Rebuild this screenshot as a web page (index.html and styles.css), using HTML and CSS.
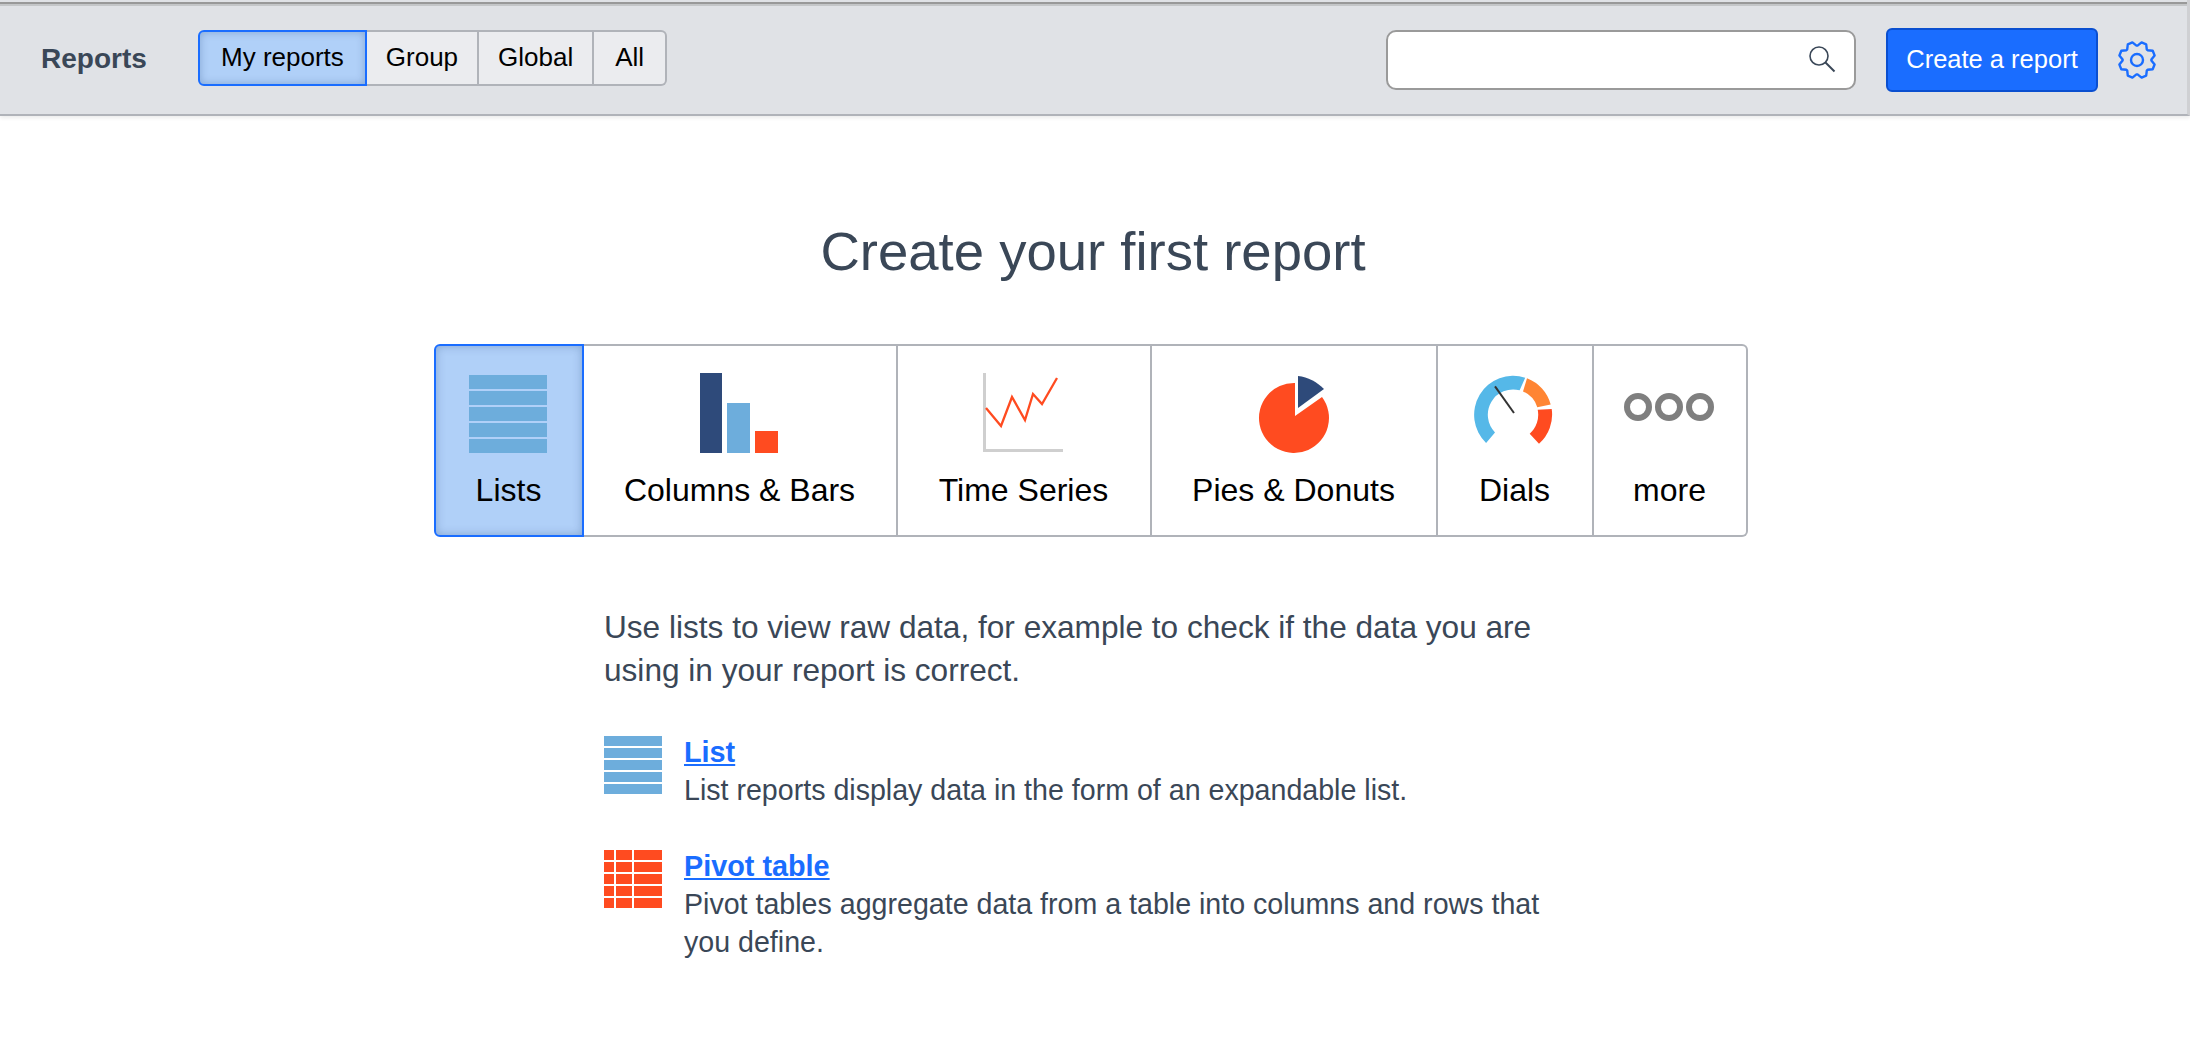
FILE: index.html
```html
<!DOCTYPE html>
<html lang="en">
<head>
    <meta charset="UTF-8">
    <title>Reports</title>
    <link rel="stylesheet" href="styles.css">
</head>
<body>
    <div class="topBar">
        <div class="barTitle">Reports</div>
        <div class="filterGroup">
            <button class="filterBtn active">My reports</button>
            <button class="filterBtn">Group</button>
            <button class="filterBtn">Global</button>
            <button class="filterBtn">All</button>
        </div>
        <div class="searchBox">
            <input class="searchInput" type="text">
            <svg class="searchIcon" width="30" height="30" viewBox="0 0 30 30">
                <circle cx="12" cy="12" r="9" fill="none" stroke="#3a4757" stroke-width="1.6"/>
                <line x1="18.500" y1="18.500" x2="27.500" y2="27.500" stroke="#3a4757" stroke-width="2"/>
            </svg>
        </div>
        <button class="createBtn">Create a report</button>
        <svg class="gearIcon" width="40" height="40" viewBox="0 0 40 40">
            <polygon transform="translate(20 20) rotate(22.5)" fill="none" stroke="#1a6dff" stroke-width="2.4" stroke-linejoin="round"
                points="-5,-13.5 -2.5,-18 2.5,-18 5,-13.5 6,-13.1 11,-14.5 14.5,-11 13.1,-6 13.5,-5 18,-2.500 18,2.500 13.500,5 13.100,6 14.500,11 11,14.500 6,13.100 5,13.500 2.500,18 -2.500,18 -5,13.500 -6,13.100 -11,14.500 -14.500,11 -13.100,6 -13.500,5 -18,2.500 -18,-2.500 -13.500,-5 -13.100,-6 -14.500,-11 -11,-14.500 -6,-13.100"/>
            <circle cx="20" cy="20" r="6" fill="none" stroke="#1a6dff" stroke-width="2.4"/>
        </svg>
    </div>

    <div class="main">
        <h1 class="pageTitle">Create your first report</h1>

        <div class="typeStrip">
            <div class="typeTab active lists">
                <svg width="78" height="80" viewBox="0 -2 78 80">
                    <rect width="78" height="14" fill="#6daddc"/>
                    <rect y="16" width="78" height="14" fill="#6daddc"/>
                    <rect y="32" width="78" height="14" fill="#6daddc"/>
                    <rect y="48" width="78" height="14" fill="#6daddc"/>
                    <rect y="64" width="78" height="14" fill="#6daddc"/>
                </svg>
                <span>Lists</span>
            </div>
            <div class="typeTab columns">
                <svg width="78" height="80" viewBox="0 0 78 80">
                    <rect width="22" height="80" fill="#2e4a7a"/>
                    <rect x="27" y="30" width="23" height="50" fill="#6daddc"/>
                    <rect x="55" y="58" width="23" height="22" fill="#ff4b20"/>
                </svg>
                <span>Columns &amp; Bars</span>
            </div>
            <div class="typeTab series">
                <svg width="80" height="80" viewBox="0 0 80 80">
                    <path d="M1.500 0V77.500H80" fill="none" stroke="#cfcfcf" stroke-width="3"/>
                    <path d="M3 35 18 53 29 24 42 47 50 21 59 31 74 5" fill="none" stroke="#ff4b20" stroke-width="2.300"/>
                </svg>
                <span>Time Series</span>
            </div>
            <div class="typeTab pies">
                <svg width="72" height="80" viewBox="-2 0 72 80">
                    <path d="M36 10A35 35 0 1 0 63 24L36 43z" fill="#ff4b20"/>
                    <path d="M39 3C49 4 58 9 65 16L39 35z" fill="#2e4a7a"/>
                </svg>
                <span>Pies &amp; Donuts</span>
            </div>
            <div class="typeTab dials">
                <svg width="80" height="80" viewBox="0 0 80 80">
                    <path d="M12.100 69.900A39 39 0 0 1 51.200 4.700L45.650 17.300A25.300 25.300 0 0 0 21 59.400z" fill="#55b8e8"/>
                    <path d="M53 5.300A39 39 0 0 1 76.700 31.600L63.300 34.300A25.300 25.300 0 0 0 49 18.400z" fill="#ff8533"/>
                    <path d="M77.700 36A39 39 0 0 1 65 70.800L55.700 60.700A25.300 25.300 0 0 0 63.700 36.700z" fill="#ff4b20"/>
                    <line x1="21" y1="13.300" x2="40" y2="40" stroke="#333" stroke-width="2"/>
                </svg>
                <span>Dials</span>
            </div>
            <div class="typeTab more">
                <svg class="moreIcon" width="90" height="28" viewBox="0 0 90 28">
                    <circle cx="14" cy="14" r="11" fill="none" stroke="#7f7f7f" stroke-width="6"/>
                    <circle cx="45" cy="14" r="11" fill="none" stroke="#7f7f7f" stroke-width="6"/>
                    <circle cx="76" cy="14" r="11" fill="none" stroke="#7f7f7f" stroke-width="6"/>
                </svg>
                <span>more</span>
            </div>
        </div>

        <div class="info">
            <p class="intro">Use lists to view raw data, for example to check if the data you are using in your report is correct.</p>
            <div class="infoItem">
                <svg class="itemIcon" width="58" height="58" viewBox="0 0 58 58">
                    <rect width="58" height="10" fill="#6daddc"/>
                    <rect y="12" width="58" height="10" fill="#6daddc"/>
                    <rect y="24" width="58" height="10" fill="#6daddc"/>
                    <rect y="36" width="58" height="10" fill="#6daddc"/>
                    <rect y="48" width="58" height="10" fill="#6daddc"/>
                </svg>
                <div>
                    <a class="itemLink" href="#">List</a>
                    <div class="itemText">List reports display data in the form of an expandable list.</div>
                </div>
            </div>
            <div class="infoItem">
                <svg class="itemIcon" width="58" height="58" viewBox="0 0 58 58">
                    <path fill="#ff4b20" d="M0 0h10v10H0zM12 0h16v10H12zM30 0h28v10H30zM0 12h10v10H0zM12 12h16v10H12zM30 12h28v10H30zM0 24h10v10H0zM12 24h16v10H12zM30 24h28v10H30zM0 36h10v10H0zM12 36h16v10H12zM30 36h28v10H30zM0 48h10v10H0zM12 48h16v10H12zM30 48h28v10H30z"/>
                </svg>
                <div>
                    <a class="itemLink" href="#">Pivot table</a>
                    <div class="itemText">Pivot tables aggregate data from a table into columns and rows that you define.</div>
                </div>
            </div>
        </div>
    </div>
</body>
</html>
```

FILE: styles.css
```css
body { margin: 0; background-color: white; color: #3a4757; font-family: "Liberation Sans", Arial, sans-serif; overflow: hidden; }
button { font-family: inherit; cursor: pointer; }

.topBar {
    display: flex;
    align-items: center;
    box-sizing: border-box;
    height: 116px;
    padding: 5px 30px 0 41px;
    background: linear-gradient(to bottom, #e0e2e6 2px, #999 2px, #999 4px, #c4c6c8 4px, #c4c6c8 6px, #e0e2e6 6px);
    border-right: 3px solid #cfd0d3;
    border-bottom: 2px solid #b0b3b9;
    box-shadow: 0 2px 4px rgba(0, 0, 0, 0.08);
}
.barTitle { width: 157px; margin-bottom: 2px; font-size: 28px; font-weight: bold; }
.filterGroup { display: flex; height: 56px; margin-bottom: 4px; }
.filterBtn {
    height: 100%;
    padding: 0 19px;
    font-size: 26px;
    color: black;
    background-color: #ebecef;
    border: 2px solid #b0b3b9;
    border-left: none;
}
.filterBtn:last-child { padding: 0 21px; border-radius: 0 6px 6px 0; }
.filterBtn.active {
    padding: 0 21px;
    background-color: #b0d0f8;
    border: 2px solid #1a6dff;
    border-radius: 6px 0 0 6px;
    box-shadow: inset 0 0 8px rgba(0, 40, 100, 0.25);
}
.searchBox { position: relative; margin-left: auto; width: 470px; height: 60px; }
.searchInput {
    box-sizing: border-box;
    width: 100%;
    height: 100%;
    background-color: white;
    border: 2px solid #9a9a9a;
    border-radius: 10px;
}
.searchIcon { position: absolute; right: 19px; top: 14px; }
.createBtn {
    width: 212px;
    height: 64px;
    margin-left: 30px;
    padding: 0;
    font-size: 25.5px;
    color: white;
    background-color: #1a6dff;
    border: 2px solid #0a4fd0;
    border-radius: 6px;
}
.gearIcon { margin-left: 19px; }

.main { display: flex; flex-direction: column; align-items: center; }
.pageTitle { margin: 0 4px 0 0; padding-top: 106px; font-size: 54.5px; font-weight: normal; line-height: 60px; }

.typeStrip { display: flex; height: 193px; margin-top: 62px; margin-right: 9px; }
.typeTab {
    box-sizing: border-box;
    display: flex;
    flex-direction: column;
    align-items: center;
    height: 100%;
    padding-top: 27px;
    color: black;
    font-size: 32px;
    border: 2px solid #b0b3b9;
    border-left: none;
}
.typeTab svg { height: 80px; margin-right: 2px; }
.typeTab span { margin-top: 15px; line-height: 44px; }
.typeTab.active {
    background-color: #b0d0f8;
    border: 2px solid #1a6dff;
    border-radius: 6px 0 0 6px;
    box-shadow: inset 0 0 10px rgba(0, 40, 100, 0.25);
}
.typeTab.lists { width: 150px; }
.typeTab.columns { width: 314px; }
.typeTab.series { width: 254px; }
.typeTab.pies { width: 286px; }
.typeTab.dials { width: 156px; }
.typeTab.more { width: 154px; border-radius: 0 6px 6px 0; }
.typeTab .moreIcon { height: 28px; margin: 20px 2px 32px 0; }

.info { box-sizing: border-box; width: 976px; margin: 69px 6px 0 0; font-size: 31.6px; }
.intro { margin: 0 0 41px; line-height: 43px; }
.infoItem { display: flex; gap: 22px; margin-bottom: 38px; font-size: 28.6px; line-height: 38px; }
.itemIcon { flex: none; margin-top: 3px; }
.itemLink { color: #1a6dff; font-weight: bold; font-size: 28.8px; }
```
